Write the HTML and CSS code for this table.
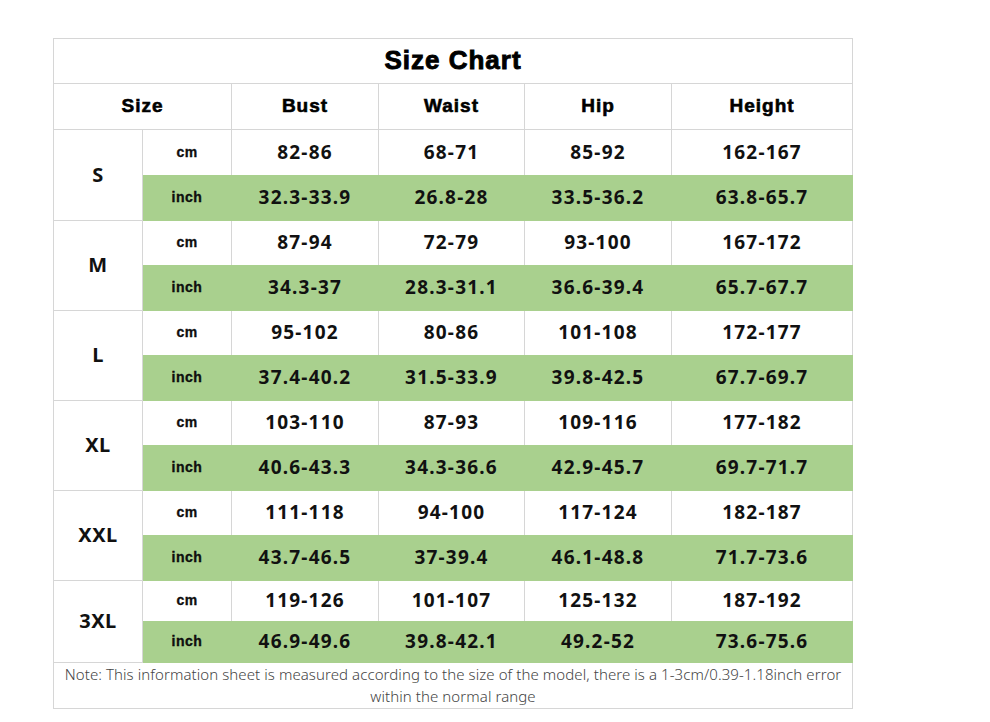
FILE: index.html
```html
<!DOCTYPE html>
<html>
<head>
<meta charset="utf-8">
<link rel="stylesheet" href="styles.css">
</head>
<body>
<div class="page">
<table class="chart">
<colgroup>
<col class="c-size"><col class="c-unit"><col class="c-bust"><col class="c-waist"><col class="c-hip"><col class="c-height">
</colgroup>
<tr class="title-row"><td colspan="6" class="title">Size Chart</td></tr>
<tr class="head-row">
<td colspan="2" class="head">Size</td><td class="head">Bust</td><td class="head">Waist</td><td class="head">Hip</td><td class="head">Height</td>
</tr>
<tr class="cm first"><td rowspan="2" class="size">S</td><td class="unit">cm</td><td>82-86</td><td>68-71</td><td>85-92</td><td>162-167</td></tr>
<tr class="inch"><td class="unit">inch</td><td>32.3-33.9</td><td>26.8-28</td><td>33.5-36.2</td><td>63.8-65.7</td></tr>
<tr class="cm"><td rowspan="2" class="size">M</td><td class="unit">cm</td><td>87-94</td><td>72-79</td><td>93-100</td><td>167-172</td></tr>
<tr class="inch"><td class="unit">inch</td><td>34.3-37</td><td>28.3-31.1</td><td>36.6-39.4</td><td>65.7-67.7</td></tr>
<tr class="cm"><td rowspan="2" class="size">L</td><td class="unit">cm</td><td>95-102</td><td>80-86</td><td>101-108</td><td>172-177</td></tr>
<tr class="inch"><td class="unit">inch</td><td>37.4-40.2</td><td>31.5-33.9</td><td>39.8-42.5</td><td>67.7-69.7</td></tr>
<tr class="cm"><td rowspan="2" class="size">XL</td><td class="unit">cm</td><td>103-110</td><td>87-93</td><td>109-116</td><td>177-182</td></tr>
<tr class="inch"><td class="unit">inch</td><td>40.6-43.3</td><td>34.3-36.6</td><td>42.9-45.7</td><td>69.7-71.7</td></tr>
<tr class="cm"><td rowspan="2" class="size">XXL</td><td class="unit">cm</td><td>111-118</td><td>94-100</td><td>117-124</td><td>182-187</td></tr>
<tr class="inch"><td class="unit">inch</td><td>43.7-46.5</td><td>37-39.4</td><td>46.1-48.8</td><td>71.7-73.6</td></tr>
<tr class="cm short"><td rowspan="2" class="size">3XL</td><td class="unit">cm</td><td>119-126</td><td>101-107</td><td>125-132</td><td>187-192</td></tr>
<tr class="inch short"><td class="unit">inch</td><td>46.9-49.6</td><td>39.8-42.1</td><td>49.2-52</td><td>73.6-75.6</td></tr>
<tr class="note-row"><td colspan="6" class="note">Note: This information sheet is measured according to the size of the model, there is a 1-3cm/0.39-1.18inch error within the normal range</td></tr>
</table>
</div>
</body>
</html>
```
FILE: styles.css
```css
html, body {
  margin: 0;
  padding: 0;
  background: #ffffff;
}
.page {
  padding: 38px 0 0 53px;
}
.chart {
  border-collapse: collapse;
  table-layout: fixed;
  width: 799px;
  border: 1px solid #d6d6d6;
  color: #111;
}
.c-size { width: 89px; }
.c-unit { width: 89px; }
.c-bust { width: 147px; }
.c-waist { width: 146px; }
.c-hip { width: 147px; }
.c-height { width: 181px; }
.chart td {
  border: 1px solid #d6d6d6;
  padding: 0 0 2px 0;
  text-align: center;
  vertical-align: middle;
  font-family: "Noto Sans", "Open Sans", sans-serif;
  font-weight: 700;
  font-size: 19px;
  letter-spacing: 1.2px;
}
.title-row td { height: 42px; }
.head-row td { height: 43px; }
.cm td { height: 42px; }
.cm.first td { height: 43px; }
.inch td { height: 42px; }
.cm.short td, .inch.short td { height: 38px; }
.note-row td { height: 43px; }
.chart td.title {
  font-family: "Liberation Sans", Arial, sans-serif;
  font-size: 26px;
  letter-spacing: 1px;
  -webkit-text-stroke: 0.9px #000;
  color: #000;
}
.chart td.head {
  font-family: "Liberation Sans", Arial, sans-serif;
  font-size: 19px;
  letter-spacing: 1px;
  -webkit-text-stroke: 0.6px #000;
  color: #000;
}
.chart td.unit {
  font-family: "Liberation Sans", Arial, sans-serif;
  font-size: 14px;
  letter-spacing: 0.5px;
  -webkit-text-stroke: 0.3px #000;
}
.chart td.size {
  font-size: 20px;
  letter-spacing: 0.5px;
}
.cm td:not(.size) {
  border-bottom-color: #a9d08e;
}
.inch td {
  background: #a9d08e;
  border-color: #a9d08e;
}
.chart td.note {
  font-family: "Noto Sans", "Open Sans", sans-serif;
  font-weight: 300;
  font-size: 15px;
  letter-spacing: 0.08px;
  line-height: 22px;
  color: #444;
  padding: 0 6px 1px 6px;
}
```
